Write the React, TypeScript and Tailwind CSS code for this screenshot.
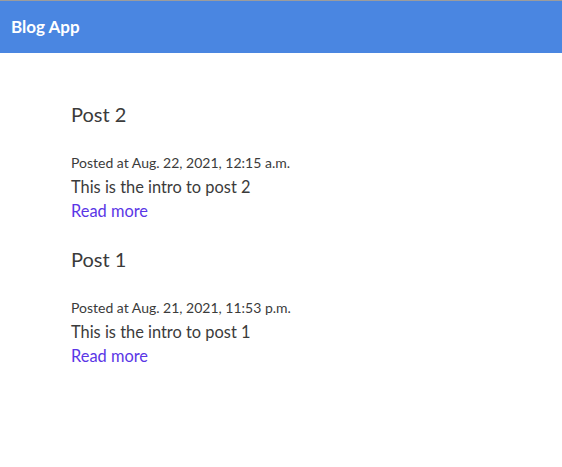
import React from "react";

const posts = [
  { id: 2, title: "Post 2", date: "Aug. 22, 2021, 12:15 a.m.", intro: "This is the intro to post 2" },
  { id: 1, title: "Post 1", date: "Aug. 21, 2021, 11:53 p.m.", intro: "This is the intro to post 1" },
];

export default function App() {
  return (
    <div className="min-h-screen bg-white font-['Lato',sans-serif] text-[#3b3b3b]">
      <nav className="h-[53px] border-t border-[#9c9c9c] bg-[#4a86e1] px-[11px] flex items-center">
        <span className="text-[17px] font-bold text-white">Blog App</span>
      </nav>

      <main className="px-[71px] pt-[47px] flex flex-col gap-[22px]">
        {posts.map((post) => (
          <article key={post.id} className="flex flex-col">
            <h2 className="text-xl leading-7 mb-[25px]">{post.title}</h2>
            <p className="text-sm leading-5">Posted at {post.date}</p>
            <p className="text-[16.4px] leading-6 mt-[2px]">{post.intro}</p>
            <a href="#" className="text-[16.4px] leading-6 text-[#5a36e6]">
              Read more
            </a>
          </article>
        ))}
      </main>
    </div>
  );
}
